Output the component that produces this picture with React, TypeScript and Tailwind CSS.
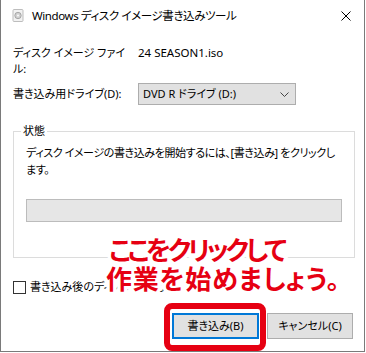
import React from "react";

export default function App() {
  return (
    <div className="relative w-[366px] h-[353px] bg-white overflow-hidden text-black [font-family:'Noto_Sans','Noto_Sans_CJK_JP',sans-serif] [font-feature-settings:'palt'] text-[11px] leading-[16px]">
      <div className="w-[365px] h-[352px] border-l border-r border-b border-[#7a7a7a] flex flex-col">
        {/* title bar */}
        <div className="h-[31px] flex items-center pl-[11px] pr-[12px] shrink-0">
          <svg width="13" height="13" viewBox="0 0 13 13" className="shrink-0">
            <rect x="1" y="0.5" width="10" height="12" rx="1" fill="#f2f2f2" stroke="#bdbdbd" />
            <circle cx="6" cy="6.5" r="3.2" fill="#d0d0d0" stroke="#9a9a9a" strokeWidth="0.8" />
            <circle cx="6" cy="6.5" r="0.9" fill="#fff" />
          </svg>
          <span className="ml-[7px] text-[11.5px] tracking-[-0.4px]">Windows ディスク イメージ書き込みツール</span>
          <svg width="10" height="10" viewBox="0 0 10 10" className="ml-auto mr-[1px]">
            <path d="M0.5 0.5 L9.5 9.5 M9.5 0.5 L0.5 9.5" stroke="#000" strokeWidth="1" />
          </svg>
        </div>

        <div className="pl-[12px] pr-[11px] flex flex-col">
          {/* row 1 */}
          <div className="flex mt-[14px]">
            <div className="w-[125px] shrink-0">ディスク イメージ ファイ<br />ル:</div>
            <div className="text-[11.5px]">24 SEASON1.iso</div>
          </div>
          {/* row 2 */}
          <div className="flex items-center mt-[6px]">
            <div className="w-[125px] shrink-0">書き込み用ドライブ(D):</div>
            <div className="w-[158px] h-[22px] bg-[#e1e1e1] border border-[#adadad] flex items-center pl-[4px] pr-[6px]">
              <span>DVD R ドライブ (D:)</span>
              <svg width="9" height="5" viewBox="0 0 9 5" className="ml-auto">
                <path d="M0.5 0.5 L4.5 4.5 L8.5 0.5" stroke="#444" strokeWidth="1" fill="none" />
              </svg>
            </div>
          </div>
          {/* group */}
          <fieldset className="mt-[18px] w-[341px] h-[135px] border border-[#dcdcdc] px-[12px]">
            <legend className="-ml-[5px] px-[2px] leading-[16px]">状態</legend>
            <div className="mt-[5px] leading-[17px] whitespace-nowrap tracking-[-0.4px]">
              ディスク イメージの書き込みを開始するには、[書き込み] をクリックし<br />ます。
            </div>
            <div className="mt-[21px] w-[316px] h-[23px] bg-[#e6e6e6] border border-[#bcbcbc]" />
          </fieldset>
          {/* checkbox */}
          <div className="flex items-center mt-[21px]">
            <div className="w-[13px] h-[13px] border border-[#333] bg-white" />
            <span className="ml-[4px]">書き込み後のディスクの確認</span>
          </div>
          {/* buttons */}
          <div className="flex justify-end gap-[8px] mt-[18px]">
            <div className="w-[87px] h-[26px] bg-[#e1e1e1] border-2 border-[#0078d7] flex items-center justify-center">書き込み(B)</div>
            <div className="w-[86px] h-[26px] bg-[#e1e1e1] border border-[#adadad] flex items-center justify-center">キャンセル(C)</div>
          </div>
        </div>
      </div>

      {/* annotation */}
      <div className="absolute left-[106px] top-[236px] text-[#e60012] font-bold text-[26px] leading-[29px] [paint-order:stroke_fill] [-webkit-text-stroke:7px_white] whitespace-nowrap">
        <div className="pl-[3px] tracking-[-3.3px]">ここをクリックして</div>
        <div className="tracking-[0.8px]">作業を始めましょう。</div>
      </div>
      <div className="absolute left-[164px] top-[303px] w-[102px] h-[48px] border-[6px] border-[#e60012] rounded-[8px]" />
    </div>
  );
}
